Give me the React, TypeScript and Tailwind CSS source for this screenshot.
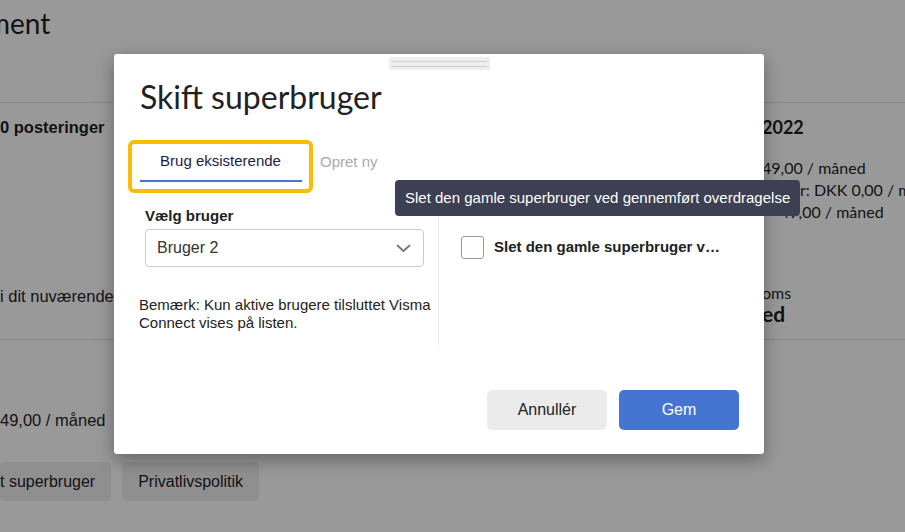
import { useState } from 'react';

const arial = "font-['Liberation_Sans',Arial,sans-serif]";
const geo = "font-['Lato','Open_Sans',sans-serif]";

function Grip() {
  return (
    <div className="mx-auto mt-[3px] flex h-[13px] w-[101px] flex-col justify-center gap-[4px] bg-[#eeeeee] px-[3px]">
      <div className="h-px bg-[#cfcfcf]" />
      <div className="h-px bg-[#cfcfcf]" />
    </div>
  );
}

function Chevron() {
  return (
    <svg width="15" height="9" viewBox="0 0 15 9" fill="none">
      <polyline points="1.5,1.5 7.5,7 13.5,1.5" stroke="#777" strokeWidth="1.8" strokeLinecap="round" strokeLinejoin="round" />
    </svg>
  );
}

function Page() {
  return (
    <div className="h-[532px] overflow-hidden bg-white text-[#1f1f1f]">
      <div className="h-[103px] overflow-hidden border-b border-[#e2e2e2] pt-[3px]">
        <h1 className={`${geo} -ml-[13px] text-[28px] leading-[40px]`}>ment</h1>
      </div>

      <div className="flex h-[237px] justify-between border-b border-[#e2e2e2]">
        <div className={`${arial} w-[300px] pt-[12px] text-[16.5px] leading-[24px]`}>
          <p className="font-bold">0 posteringer</p>
          <p className="mt-[145px]">i dit nuværende</p>
        </div>
        <div className={`${geo} w-[143px] overflow-hidden whitespace-nowrap pt-[12px] text-[16px] leading-[22px]`}>
          <p className="text-[18px] font-bold leading-[24px]">2022</p>
          <p className="mt-[18px]">49,00 / måned</p>
          <p className="pl-[38px]">r: DKK 0,00 / måned</p>
          <p className="pl-[18px]">49,00 / måned</p>
          <p className="mt-[59px]">oms</p>
          <p className="text-[21px] font-bold leading-[20px]">ed</p>
        </div>
      </div>

      <div className={`${arial} pt-[68px] text-[16.5px]`}>
        <p className="leading-[24px]">49,00 / måned</p>
        <div className="mt-[30px] flex gap-[11px] text-[16px]">
          <button className="h-[39px] rounded-[5px] bg-[#eeeeee] pr-[16px]">t superbruger</button>
          <button className="h-[39px] rounded-[5px] bg-[#eeeeee] px-[16px]">Privatlivspolitik</button>
        </div>
      </div>
    </div>
  );
}

function SwitchDialog() {
  const [tab, setTab] = useState<'existing' | 'new'>('existing');
  const [removeOld, setRemoveOld] = useState(false);

  return (
    <div className={`${arial} absolute left-[114px] top-[54px] h-[400px] w-[650px] rounded-[3px] bg-white shadow-[0_6px_18px_rgba(0,0,0,0.35)]`}>
      <Grip />

      <h2 className={`${geo} ml-[26px] mt-[7px] text-[32px] leading-[40px] text-[#222]`}>Skift superbruger</h2>

      <div className="ml-[14px] mt-[23px] flex items-start">
        <div className="flex h-[53px] w-[185px] items-center justify-center rounded-[6px] border-4 border-[#fbbc05]">
          <button
            onClick={() => setTab('existing')}
            className="flex h-[31px] w-[162px] items-start justify-center border-b-2 border-[#4a72d4] pt-[1px] text-[15px] leading-[18px] text-[#1c1c4a]"
          >
            Brug eksisterende
          </button>
        </div>
        <button
          onClick={() => setTab('new')}
          className={`ml-[7px] mt-[12px] text-[15px] leading-[20px] ${tab === 'new' ? 'text-[#1c1c4a]' : 'text-[#aaaaaa]'}`}
        >
          Opret ny
        </button>
      </div>

      <div className="mt-[7px] flex">
        <div className="ml-[25px] w-[300px] border-r border-[#e6e6e6] pb-[13px] pr-[4px]">
          <div className="pl-[6px] pr-[10px] pt-[8px]">
            <label className="block text-[15px] font-bold leading-[16px] text-[#222]">Vælg bruger</label>
            <div className="mt-[5px] flex h-[38px] items-center justify-between rounded-[4px] border border-[#cccccc] pl-[11px] pr-[12px]">
              <span className="text-[16px] text-[#333]">Bruger 2</span>
              <Chevron />
            </div>
          </div>
          <p className="mt-[29px] text-[15px] leading-[18px] text-[#222]">
            Bemærk: Kun aktive brugere tilsluttet Visma Connect vises på listen.
          </p>
        </div>

        <div className="min-w-0 flex-1 pl-[22px] pr-[40px] pt-[36px]">
          <label className="flex cursor-pointer items-center gap-[10px]">
            <span
              onClick={() => setRemoveOld(!removeOld)}
              className="h-[23px] w-[23px] shrink-0 rounded-[3px] border border-[#999] bg-white"
            >
              {removeOld && <span className="block h-full w-full rounded-[2px] bg-[#4a72d4]" />}
            </span>
            <span className="truncate text-[15px] font-bold text-[#222]">Slet den gamle superbruger ved gennemført overdragelse</span>
          </label>
        </div>
      </div>

      <div className="mr-[25px] mt-[45px] flex justify-end gap-[12px]">
        <button className="h-[40px] w-[120px] rounded-[5px] bg-[#ebebeb] text-[16px] text-[#222]">Annullér</button>
        <button className="h-[40px] w-[120px] rounded-[5px] bg-[#4674d2] text-[16px] text-white">Gem</button>
      </div>

      {/* hover tooltip for the truncated checkbox label */}
      <div className="absolute left-[281px] top-[126px] flex h-[36px] items-center whitespace-nowrap rounded-[4px] bg-[#3d3f52] px-[10px] text-[15px] text-white">
        Slet den gamle superbruger ved gennemført overdragelse
      </div>
    </div>
  );
}

export default function App() {
  return (
    <div className="relative h-[532px] w-full overflow-hidden">
      <Page />
      <div className="absolute inset-0 bg-black/40" />
      <SwitchDialog />
    </div>
  );
}
